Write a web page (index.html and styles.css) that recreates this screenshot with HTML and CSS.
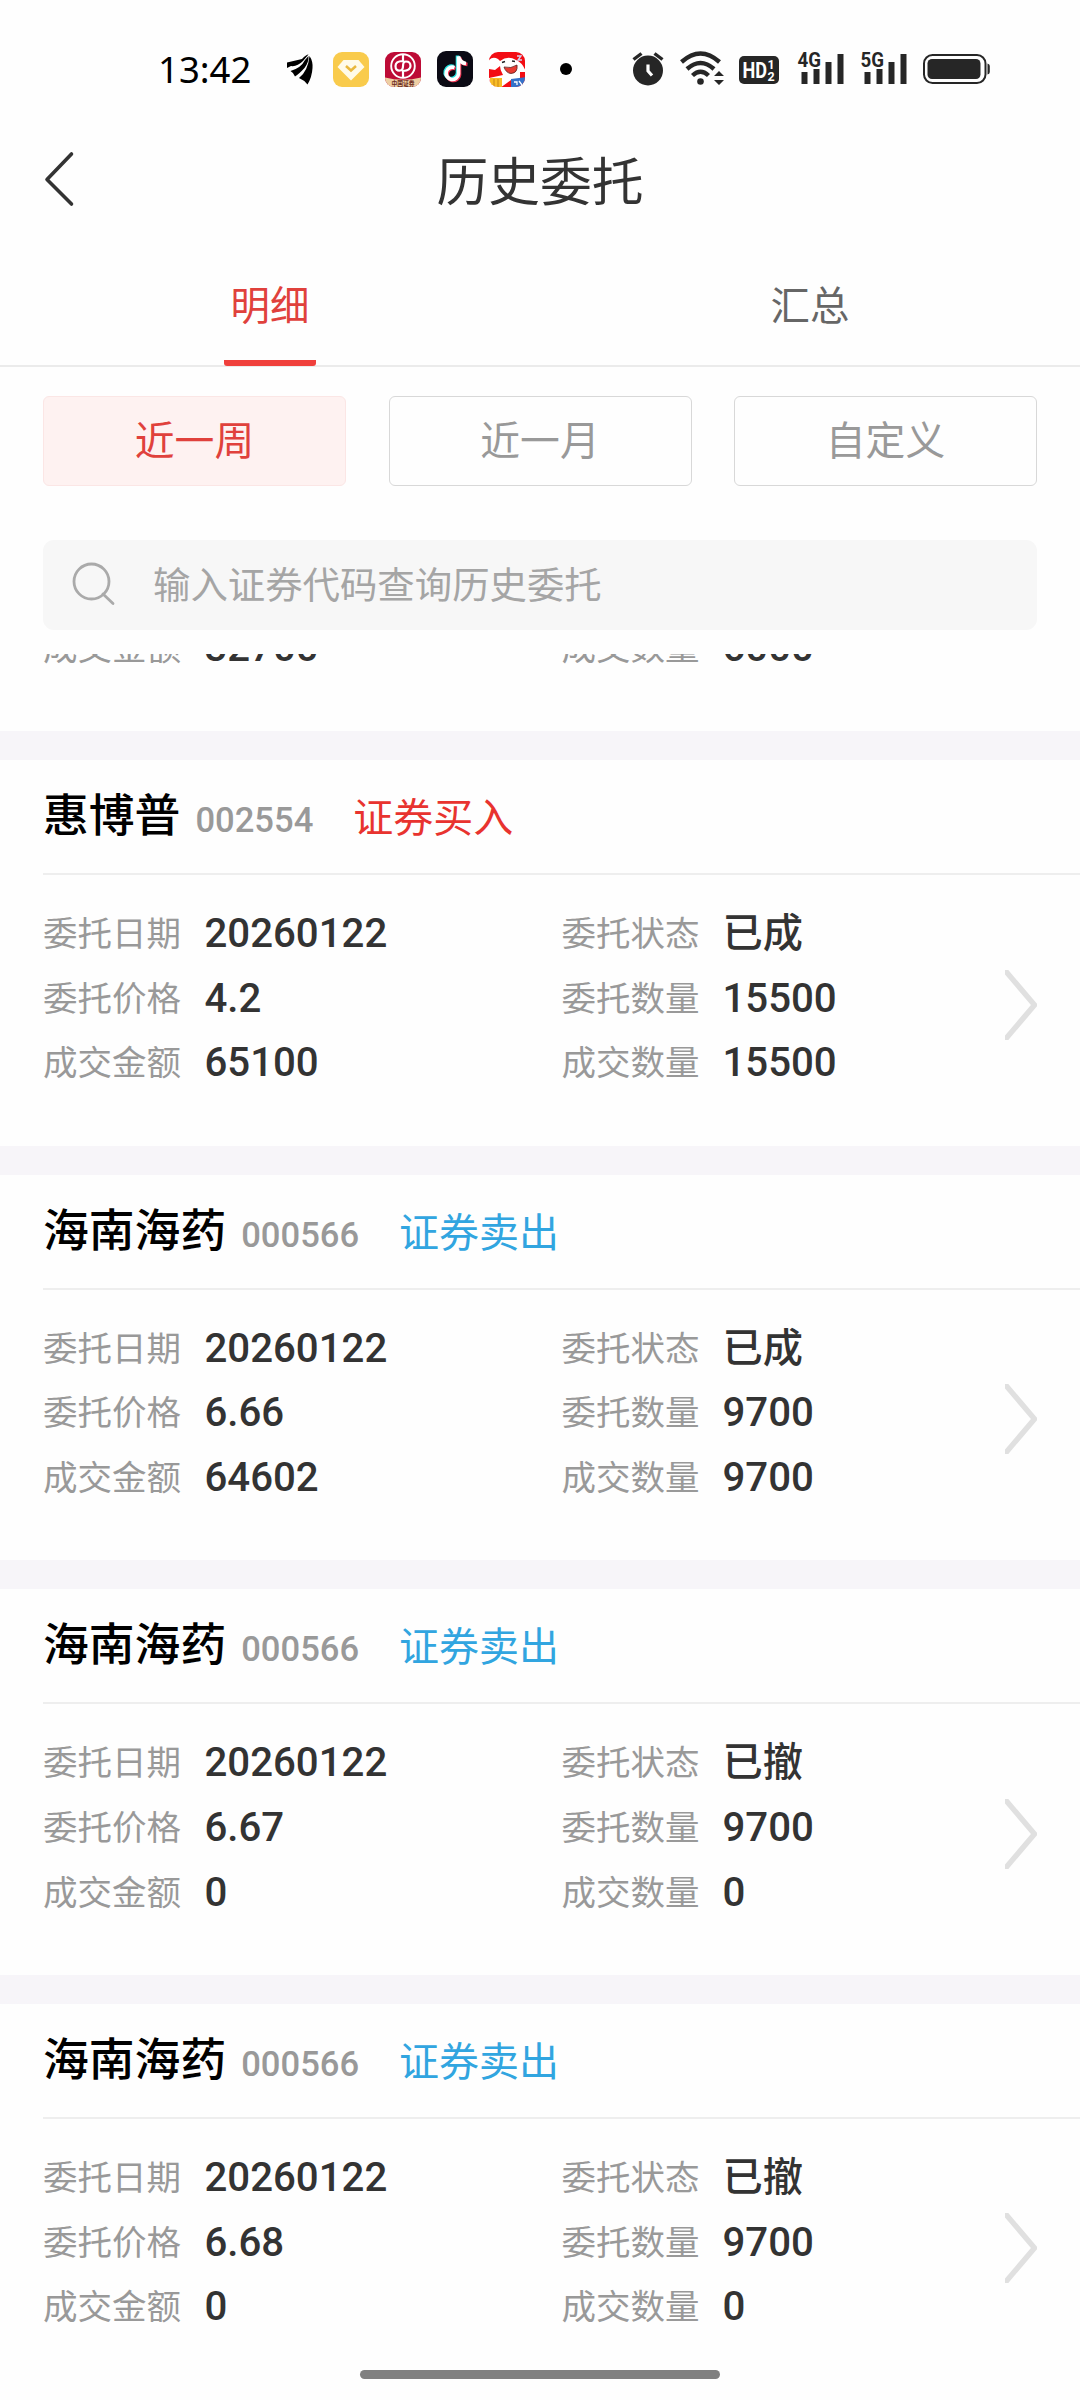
FILE: index.html
```html
<!DOCTYPE html>
<html lang="zh-CN">
<head>
<meta charset="utf-8">
<title>历史委托</title>
<link rel="stylesheet" href="styles.css">
</head>
<body>
<div class="screen">
  <div class="status">
    <span class="clock">13:42</span>
    <svg class="status-icons" width="820" height="50" viewBox="260 45 820 50">
      <g fill="#000">
        <path d="M287 62.500L302 59Q306 54.500 308.500 54.500L303 61Q297 67 291 66L287 68Z"/>
        <path d="M290.500 71Q301 68 305 60L308.500 56Q309 62 304.500 68Q299 74 295 76.500Q294 73 290.500 71Z"/>
        <path d="M299 78Q308 71 309.500 56Q313 61 312.500 68Q312 77 307.500 84.500Q304 80 299 78Z"/>
      </g>
      <rect x="333" y="52" width="36" height="35" rx="9" fill="#f9cb4c"/>
      <path d="M343.500 60H358.500L364.500 67L351 80.500L337.500 67Z" fill="#fffbe9"/>
      <path d="M346 66L351 70.500L356 66" fill="none" stroke="#e9b83d" stroke-width="2.500"/>
      <clipPath id="app-bank"><rect x="385" y="52" width="36" height="35" rx="9"/></clipPath>
      <g clip-path="url(#app-bank)">
        <rect x="385" y="52" width="36" height="35" fill="#bd0b36"/>
        <path d="M385 77.500Q403 82 421 77.500V87H385Z" fill="#edcfa4"/>
        <circle cx="403" cy="66" r="11.800" fill="none" stroke="#fff" stroke-width="1.900"/>
        <path d="M403 54V61Q395.500 61 395.500 66T400 70.500Q403 70.500 403 66T406 61.500Q410.500 61.500 410.500 66T403 71V78" fill="none" stroke="#fff" stroke-width="2.200"/>
        <text x="403" y="86" text-anchor="middle" class="tiny" textLength="23" lengthAdjust="spacingAndGlyphs">中国证券</text>
      </g>
      <rect x="437" y="51" width="36" height="36" rx="9" fill="#0b0a14"/>
      <g fill="none" stroke-width="3.600">
        <path d="M454.500 67.500A6.200 6.200 0 1 0 458.500 74V56.500" stroke="#25e4e2" transform="translate(-1 -1)"/>
        <path d="M454.500 67.500A6.200 6.200 0 1 0 458.500 74V56.500Q460 63 466.500 63.500" stroke="#ee3553" transform="translate(1 1)"/>
        <path d="M454.500 67.500A6.200 6.200 0 1 0 458.500 74V56.500Q460 63 466 63.500" stroke="#fff"/>
      </g>
      <clipPath id="app-shop"><rect x="489" y="52" width="36" height="35" rx="9"/></clipPath>
      <g clip-path="url(#app-shop)">
        <rect x="489" y="52" width="37" height="36" fill="#f30d14"/>
        <path d="M489 60Q493 56 498 59L500 61Q508 55 516 60Q523 63 526 72L520 72V80H511L500 88H489V78L503 75Q500 70 500 66L495 70L489 69Z" fill="#fff"/>
        <path d="M504 67Q511 69 517 65Q518 73 511 73.500Q506 73 504 67Z" fill="#e83b32" stroke="#5b201e" stroke-width=".8"/>
        <path d="M502 62.500L505 61.500M512 61L515 61.500" stroke="#222" stroke-width="1.500"/>
        <path d="M517 56H521L518 60H522" stroke="#cfd8f5" stroke-width="1.300" fill="none"/>
        <rect x="490" y="78" width="12" height="9" fill="#f8bd26"/>
        <path d="M494 79V87M498 79V87" stroke="#c98717"/>
        <path d="M511 79L526 77V88H511Z" fill="#3471c9"/>
        <path d="M514 82H517V85M519 81L522 85" stroke="#fff" stroke-width="1.300" fill="none"/>
      </g>
      <circle cx="566" cy="69" r="6" fill="#000"/>
      <g fill="#262626" stroke="#262626">
        <circle cx="648" cy="70.500" r="15" stroke="none"/>
        <path d="M633.500 59.500L641.500 53.500M654.500 53.500L662.500 59.500" fill="none" stroke-width="3.400"/>
        <path d="M648 64.500V71L652 75.500" fill="none" stroke="#fff" stroke-width="3.200"/>
        <path d="M681.500 62Q700.500 45 719.500 62M687 69Q700.500 57 714 69M692.500 75.500Q700.500 68 708.500 75.500" fill="none" stroke-width="4.400"/>
        <circle cx="700.500" cy="81.500" r="3.300" stroke="none"/>
        <path d="M714 76L719 71L724 76ZM714 80L719 85L724 80Z" stroke="none"/>
        <rect x="739" y="56" width="40" height="28" rx="5" stroke="none"/>
        <path d="M801.500 72h6v12h-6zM813.500 69h6v15h-6zM825.500 62h6v22h-6zM837.500 54h6v30h-6zM864.500 72h6v12h-6zM876.500 69h6v15h-6zM888.500 62h6v22h-6zM900.500 54h6v30h-6z" stroke="none"/>
        <rect x="924" y="55" width="61.500" height="28" rx="8.500" fill="none" stroke-width="2"/>
        <rect x="927.500" y="59" width="53" height="20" rx="4.500" stroke="none"/>
        <path d="M987.500 63.500Q989.800 64 989.800 66V72Q989.800 74 987.500 74.500Z" stroke="none"/>
      </g>
      <text x="742.500" y="77.700" class="hd" textLength="24.500" lengthAdjust="spacingAndGlyphs">HD</text>
      <text x="767.500" y="69" class="hd-n">1</text>
      <text x="767.500" y="80.500" class="hd-n">2</text>
      <text x="797.500" y="66.800" class="net" textLength="23.500" lengthAdjust="spacingAndGlyphs">4G</text>
      <text x="860.500" y="66.800" class="net" textLength="23.500" lengthAdjust="spacingAndGlyphs">5G</text>
    </svg>
  </div>

  <header class="title-bar">
    <svg class="back" width="36" height="60" viewBox="0 0 36 60"><path d="M28.500 5L4 30.500L28.500 55" fill="none" stroke="#333" stroke-width="3.600" stroke-linecap="round" stroke-linejoin="round"/></svg>
    <h1>历史委托</h1>
  </header>

  <nav class="tabs">
    <div class="tab on"><span>明细</span></div>
    <div class="tab"><span>汇总</span></div>
  </nav>

  <div class="ranges">
    <div class="range on">近一周</div>
    <div class="range">近一月</div>
    <div class="range">自定义</div>
  </div>

  <div class="search">
    <svg width="46" height="46" viewBox="0 0 46 46"><g fill="none" stroke="#aaa" stroke-width="2.800"><circle cx="21.500" cy="19.500" r="17.500"/><path d="M33 32L43 41.500" stroke-linecap="round"/></g></svg>
    <span>输入证券代码查询历史委托</span>
  </div>

  <main class="list">
    <article class="card partial">
      <div class="fields">
        <span class="k">成交金额</span><b>32700</b><span class="k">成交数量</span><b>6000</b>
      </div>
    </article>

    <article class="card">
      <div class="head"><strong>惠博普</strong><span class="code">002554</span><span class="side buy">证券买入</span></div>
      <div class="fields">
        <span class="k">委托日期</span><b>20260122</b><span class="k">委托状态</span><b>已成</b>
        <span class="k">委托价格</span><b>4.2</b><span class="k">委托数量</span><b>15500</b>
        <span class="k">成交金额</span><b>65100</b><span class="k">成交数量</span><b>15500</b>
      </div>
      <svg class="more" width="32" height="70" viewBox="0 0 32 70"><path d="M-2 -2L29.500 35L-2 72"/></svg>
    </article>

    <article class="card">
      <div class="head"><strong>海南海药</strong><span class="code">000566</span><span class="side">证券卖出</span></div>
      <div class="fields">
        <span class="k">委托日期</span><b>20260122</b><span class="k">委托状态</span><b>已成</b>
        <span class="k">委托价格</span><b>6.66</b><span class="k">委托数量</span><b>9700</b>
        <span class="k">成交金额</span><b>64602</b><span class="k">成交数量</span><b>9700</b>
      </div>
      <svg class="more" width="32" height="70" viewBox="0 0 32 70"><path d="M-2 -2L29.500 35L-2 72"/></svg>
    </article>

    <article class="card">
      <div class="head"><strong>海南海药</strong><span class="code">000566</span><span class="side">证券卖出</span></div>
      <div class="fields">
        <span class="k">委托日期</span><b>20260122</b><span class="k">委托状态</span><b>已撤</b>
        <span class="k">委托价格</span><b>6.67</b><span class="k">委托数量</span><b>9700</b>
        <span class="k">成交金额</span><b>0</b><span class="k">成交数量</span><b>0</b>
      </div>
      <svg class="more" width="32" height="70" viewBox="0 0 32 70"><path d="M-2 -2L29.500 35L-2 72"/></svg>
    </article>

    <article class="card">
      <div class="head"><strong>海南海药</strong><span class="code">000566</span><span class="side">证券卖出</span></div>
      <div class="fields">
        <span class="k">委托日期</span><b>20260122</b><span class="k">委托状态</span><b>已撤</b>
        <span class="k">委托价格</span><b>6.68</b><span class="k">委托数量</span><b>9700</b>
        <span class="k">成交金额</span><b>0</b><span class="k">成交数量</span><b>0</b>
      </div>
      <svg class="more" width="32" height="70" viewBox="0 0 32 70"><path d="M-2 -2L29.500 35L-2 72"/></svg>
    </article>
  </main>
  <div class="home-bar"></div>
</div>
</body>
</html>
```
FILE: styles.css
```css
* { box-sizing: border-box; }
body { margin: 0; background: #fefefe; font-family: Roboto, "Noto Sans CJK SC", sans-serif; color: #333; }
.screen { position: relative; width: 1080px; height: 2400px; overflow: hidden; display: flex; flex-direction: column; background: #fefefe; }

.status { flex: none; height: 130px; display: flex; align-items: flex-start; padding-top: 45px; }
.clock { width: 260px; padding-left: 158px; font: 36.5px/48px "Noto Sans", sans-serif; color: #000; white-space: nowrap; }
.status-icons { flex: none; }
.tiny { font: 700 7px "Noto Sans CJK SC", sans-serif; fill: #6e2a20; }
.hd { font: 700 22px Roboto, sans-serif; fill: #fff; stroke: none; }
.hd-n { font: 700 12.5px Roboto, sans-serif; fill: #fff; }
.net { font: 700 20.5px Roboto, sans-serif; fill: #262626; stroke: #fefefe; stroke-width: 3px; paint-order: stroke; }

.title-bar { flex: none; height: 130px; display: grid; grid-template-columns: 77px 1fr 77px; align-items: start; padding-top: 19px; }
.back { margin-left: 42.500px; }
h1 { margin: 0; padding-top: 3px; font-size: 51.8px; line-height: 64px; font-weight: 400; text-align: center; }

.tabs { flex: none; height: 107px; display: grid; grid-template-columns: 1fr 1fr; border-bottom: 2px solid #ebebeb; }
.tab { display: flex; justify-content: center; font-size: 39.400px; line-height: 94px; color: #666; }
.tab span { width: 92px; text-align: center; height: 106px; }
.tab.on span { color: #e0413c; border-bottom: 6px solid #f0403c; border-radius: 3px; }

.ranges { flex: none; display: grid; grid-template-columns: repeat(3, 1fr); gap: 42.500px; padding: 29px 43px 0; }
.range { height: 90px; border: 1.500px solid #d8d8d8; border-radius: 6px; font-size: 39.800px; line-height: 90px; text-align: center; color: #999; }
.range.on { background: #fef2f1; border-color: #fbe6e5; color: #e0413c; }

.search { flex: none; margin: 54px 43px 24px; height: 90px; padding-left: 27px; display: flex; align-items: center; gap: 37px; border-radius: 11px; background: #f7f7f7; font-size: 37.4px; color: #a5a5a5; }
.search span { padding-bottom: 5px; }

.list { flex: 1; min-height: 0; overflow: hidden; }
.card { position: relative; height: 414.600px; border-bottom: 29px solid #f7f5f9; }
.card:last-child { border-bottom: 0; }
.partial { display: flow-root; height: 106px; }
.head { height: 115px; margin-left: 43px; border-bottom: 2px solid #eee; display: flex; align-items: baseline; line-height: 114px; }
.head strong { font-size: 45.8px; font-weight: 500; color: #000; }
.code { margin-left: 15px; font-size: 34.600px; font-weight: 500; color: #999; }
.side { margin-left: 40px; font-size: 40px; color: #31a5e0; }
.buy { color: #e8332f; }
.fields { display: grid; grid-template-columns: 161.500px 357px 161px 1fr; grid-auto-rows: 64.600px; align-items: center; padding: 27px 0 0 43px; line-height: 64px; }
.partial .fields { padding-top: 0; margin-top: -38.500px; }
.k { font-size: 34.500px; color: #999; }
.fields b { font-size: 40.200px; font-weight: 500; color: #333; }
.more { position: absolute; right: 43px; top: 209.500px; overflow: hidden; }
.more path { fill: none; stroke: #e0e0e0; stroke-width: 5.500px; }

.home-bar { position: absolute; left: 360px; bottom: 21px; width: 360px; height: 9px; border-radius: 5px; background: #808080; }
```
